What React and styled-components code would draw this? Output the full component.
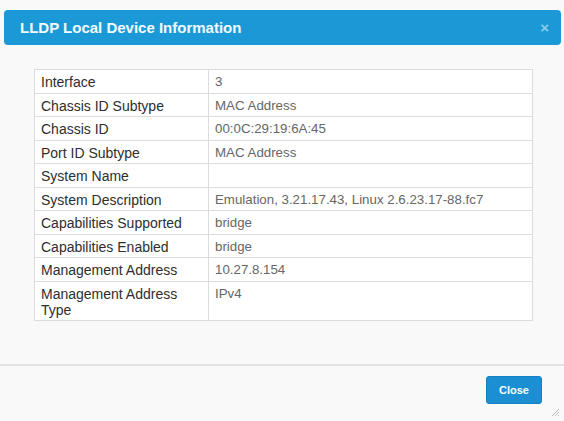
import React from "react";
import styled, { createGlobalStyle } from "styled-components";

const GlobalStyle = createGlobalStyle`
  body {
    margin: 0;
    background: #f9f9f9;
    font-family: "Liberation Sans", Arial, sans-serif;
  }
`;

// Ventana del dialogo
const Dialog = styled.div`
  width: 564px;
  height: 421px;
  padding-top: 10px;
  box-sizing: border-box;
  display: flex;
  flex-direction: column;
  position: relative;
  background: #f9f9f9;
`;

const Header = styled.div`
  margin: 0 3px 0 4px;
  height: 35px;
  background: #1b99d7;
  border-radius: 4px;
  display: flex;
  align-items: center;
  justify-content: space-between;
  padding: 0 12px 0 16px;
  color: #fff;
`;

const Title = styled.h4`
  margin: 0;
  font-size: 15px;
  font-weight: bold;
  color: #f2fbff;
`;

const CloseX = styled.span`
  font-size: 15px;
  font-weight: bold;
  color: #8ec9e6;
`;

const Body = styled.div`
  padding: 24px 31px 0 34px;
  height: 295px;
`;

const Table = styled.table`
  width: 100%;
  border-collapse: collapse;
  background: #fff;
  border: 1px solid #dcdcdc;
`;

const Cell = styled.td`
  border: 1px solid #dcdcdc;
  padding: 4px 6px 2.5px;
  line-height: 16px;
  vertical-align: top;
  font-size: ${(p) => (p.$label ? "14px" : "13.3px")};
  color: ${(p) => (p.$label ? "#2e2e2e" : "#666")};
  width: ${(p) => (p.$label ? "161px" : "auto")};
`;

const Footer = styled.div`
  border-top: 2px solid #e2e2e2;
  display: flex;
  justify-content: flex-end;
  padding: 10px 22px 0 0;
  flex: 1;
`;

const Button = styled.button`
  width: 56px;
  height: 28px;
  background: #1b8fd2;
  color: #fff;
  border: 1px solid #1580c0;
  border-radius: 3px;
  font-family: "Liberation Sans", Arial, sans-serif;
  font-size: 11px;
  font-weight: bold;
`;

const Grip = styled.svg`
  position: absolute;
  right: 4px;
  bottom: 4px;
`;

const rows = [
  ["Interface", "3"],
  ["Chassis ID Subtype", "MAC Address"],
  ["Chassis ID", "00:0C:29:19:6A:45"],
  ["Port ID Subtype", "MAC Address"],
  ["System Name", ""],
  ["System Description", "Emulation, 3.21.17.43, Linux 2.6.23.17-88.fc7"],
  ["Capabilities Supported", "bridge"],
  ["Capabilities Enabled", "bridge"],
  ["Management Address", "10.27.8.154"],
  ["Management Address Type", "IPv4"],
];

const App = () => {
  return (
    <Dialog>
      <GlobalStyle />
      <Header>
        <Title>LLDP Local Device Information</Title>
        <CloseX>×</CloseX>
      </Header>
      <Body>
        <Table>
          <tbody>
            {rows.map(([k, v]) => (
              <tr key={k}>
                <Cell $label>{k}</Cell>
                <Cell>{v}</Cell>
              </tr>
            ))}
          </tbody>
        </Table>
      </Body>
      <Footer>
        <Button>Close</Button>
      </Footer>
      <Grip width="10" height="10" viewBox="0 0 10 10">
        <path d="M9 2 L2 9 M9 5 L5 9 M9 8 L8 9" stroke="#bbb" strokeWidth="1" />
      </Grip>
    </Dialog>
  );
};

export default App;
